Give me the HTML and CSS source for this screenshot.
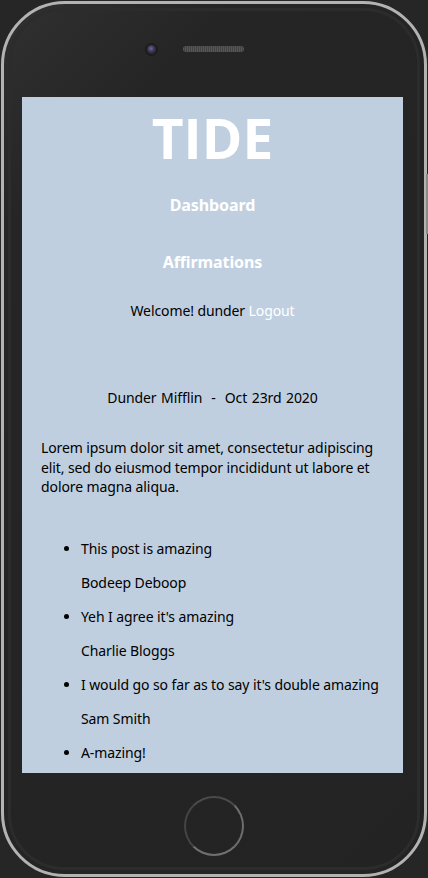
FILE: index.html
```html
<!DOCTYPE html>
<html>
<head>
<meta charset="utf-8">
<link rel="stylesheet" href="styles.css">
</head>
<body>
<div class="phone">
  <div class="side-btn"></div>
  <div class="bezel">
    <div class="top">
      <span class="camera"></span>
      <span class="speaker"></span>
    </div>
    <div class="screen">
      <header class="header">
        <h1 class="logo">TIDE</h1>
        <nav class="nav">
          <a class="nav-link">Dashboard</a>
          <a class="nav-link">Affirmations</a>
        </nav>
        <p class="welcome">Welcome! dunder <a class="logout">Logout</a></p>
      </header>
      <main class="post">
        <p class="meta">Dunder Mifflin &nbsp;-&nbsp; Oct 23rd 2020</p>
        <p class="body">Lorem ipsum dolor sit amet, consectetur adipiscing elit, sed do eiusmod tempor incididunt ut labore et dolore magna aliqua.</p>
        <ul class="comments">
          <li class="comment">This post is amazing</li>
          <p class="author">Bodeep Deboop</p>
          <li class="comment">Yeh I agree it's amazing</li>
          <p class="author">Charlie Bloggs</p>
          <li class="comment">I would go so far as to say it's double amazing</li>
          <p class="author">Sam Smith</p>
          <li class="comment">A-mazing!</li>
        </ul>
      </main>
    </div>
    <div class="bottom">
      <span class="home"></span>
    </div>
  </div>
</div>
</body>
</html>
```
FILE: styles.css
```css
html, body {
  margin: 0;
  padding: 0;
  background: #262626;
}
body {
  width: 428px;
  height: 878px;
  overflow: hidden;
}
.phone {
  position: relative;
  box-sizing: border-box;
  width: 426px;
  height: 876px;
  margin: 1px;
  border: 3px solid #b3b3b3;
  border-radius: 64px;
  background: linear-gradient(135deg, #303030 0%, #252525 18%, #232323 100%);
  padding: 4px;
}
.side-btn {
  position: absolute;
  right: -4px;
  top: 170px;
  width: 2px;
  height: 60px;
  background: #8a8a8a;
}
.bezel {
  box-sizing: border-box;
  height: 100%;
  border: 3px solid #2c2c2c;
  border-radius: 56px;
  display: flex;
  flex-direction: column;
  align-items: center;
}
.top {
  box-sizing: border-box;
  height: 86px;
  display: flex;
  align-items: center;
  justify-content: center;
  gap: 27px;
  padding-right: 38px;
  padding-bottom: 10px;
  flex-shrink: 0;
}
.camera {
  width: 9px;
  height: 9px;
  border-radius: 50%;
  background: radial-gradient(circle at 45% 40%, #6a6a9a 0%, #3a3450 45%, #1a1a1a 100%);
  box-shadow: 0 0 0 2px #1c1c1c;
}
.speaker {
  width: 61px;
  height: 6px;
  border-radius: 3px;
  background: repeating-linear-gradient(90deg, #555 0 1px, #444 1px 2px);
}
.screen {
  width: 381px;
  height: 676px;
  margin-right: 3px;
  flex-shrink: 0;
  background: #bfcfdf;
  overflow: hidden;
  font-family: "Noto Sans", "Open Sans", sans-serif;
  color: #000;
  font-size: 14px;
  letter-spacing: -0.1px;
}
.header {
  display: flex;
  flex-direction: column;
  align-items: center;
}
.logo {
  margin: 8px 0 0;
  font-size: 55px;
  line-height: 66px;
  font-weight: 700;
  color: #fff;
  font-family: "Open Sans", "Noto Sans", sans-serif;
  letter-spacing: 0;
}
.nav {
  display: flex;
  flex-direction: column;
  align-items: center;
  gap: 35px;
  margin-top: 23px;
}
.nav-link {
  color: #fff;
  font-weight: 700;
  font-size: 16px;
  line-height: 22px;
}
.welcome {
  margin: 28px 0 0;
  line-height: 20px;
}
.logout {
  color: #fff;
}
.post {
  padding: 0 19px;
}
.meta {
  margin: 67px 0 0;
  text-align: center;
  line-height: 20px;
  word-spacing: 1px;
}
.body {
  margin: 30px 0 0;
  line-height: 19.5px;
}
.comments {
  margin: 42px 0 0;
  padding-left: 40px;
  display: flex;
  flex-direction: column;
  gap: 14px;
}
.comment, .author {
  margin: 0;
  line-height: 20px;
}
.bottom {
  flex: 1;
  display: flex;
  align-items: center;
  justify-content: center;
}
.home {
  box-sizing: border-box;
  width: 60px;
  height: 60px;
  border-radius: 50%;
  border: 2px solid #5a5a5a;
  border-top-color: #4a4a4a;
  border-left-color: #444;
  border-right-color: #6e6e6e;
  border-bottom-color: #707070;
  margin-top: 12px;
}
```
